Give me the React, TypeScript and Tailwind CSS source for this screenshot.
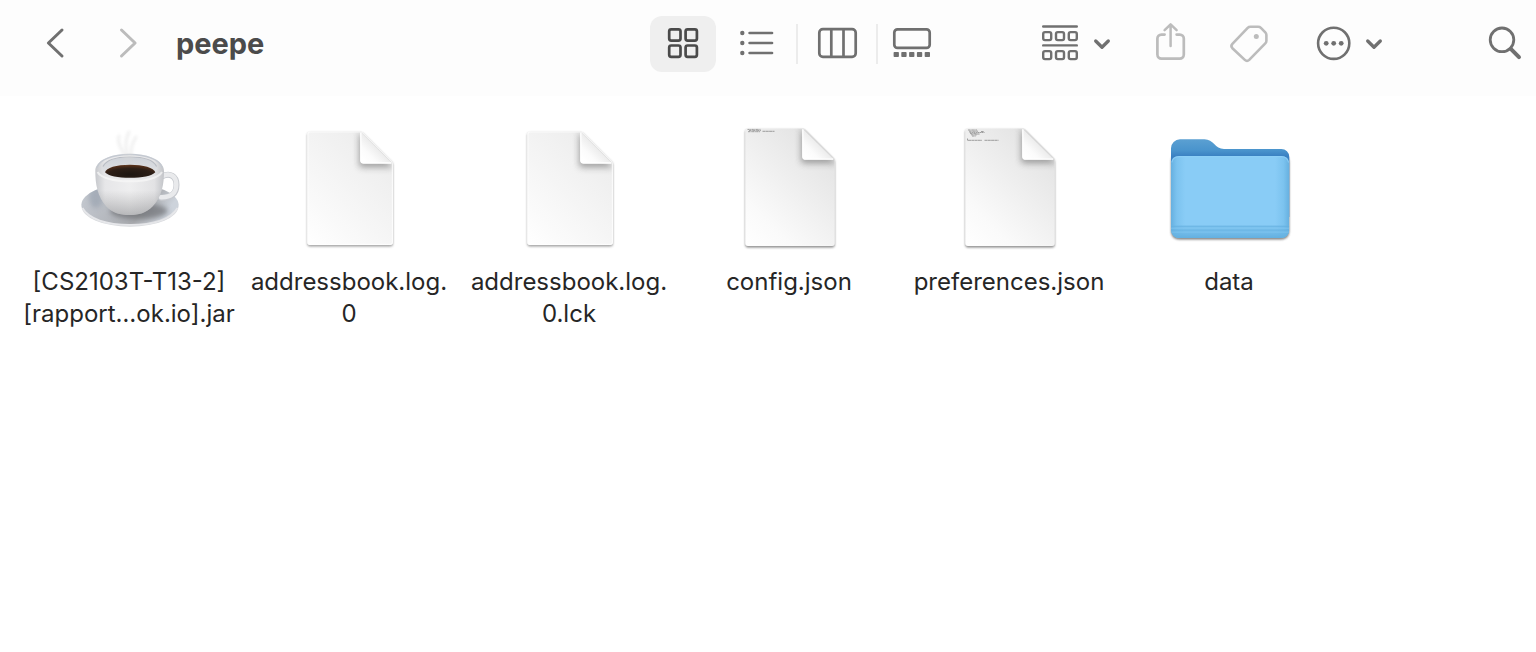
import type { ReactNode } from "react";

function Icon({ children }: { children: ReactNode }) {
  return (
    <svg
      viewBox="0 0 40 40"
      aria-hidden="true"
      fill="none"
      stroke="currentColor"
      strokeWidth="2.7"
      strokeLinecap="round"
      strokeLinejoin="round"
      className="h-10 w-10 shrink-0 overflow-visible"
    >
      {children}
    </svg>
  );
}

function MenuChevron() {
  return (
    <svg viewBox="0 0 20 40" aria-hidden="true" fill="none" className="h-10 w-5 shrink-0">
      <path
        d="M3.7 17l6.3 6.2 6.3-6.2"
        stroke="currentColor"
        strokeWidth="3.3"
        strokeLinecap="round"
        strokeLinejoin="round"
      />
    </svg>
  );
}

function Divider() {
  return <span className="h-10 w-0.5 bg-[#ececec]" />;
}

function Toolbar() {
  return (
    <header className="flex h-24 items-center bg-[#fdfdfd] pr-[11px] pb-2 pl-9 text-[#707070]">
      <nav className="flex min-w-0 flex-1 items-center">
        <button type="button" aria-label="Back">
          <Icon>
            <path d="M26 6 12.4 19 26 32" strokeWidth="3" />
          </Icon>
        </button>
        <button type="button" aria-label="Forward" className="ml-8 text-[#bcbcbc]">
          <Icon>
            <path d="M13.500 6l13.6 13-13.6 13" strokeWidth="3" />
          </Icon>
        </button>
        <h1 className="ml-7 truncate text-[29px] leading-10 font-bold text-[#4b4b4b]">peepe</h1>
      </nav>

      <div className="flex shrink-0 items-center" role="group" aria-label="View">
        <button
          type="button"
          aria-label="Icons"
          aria-pressed="true"
          className="flex h-14 w-[66px] items-center justify-center rounded-xl bg-[#efefef] text-[#4a4a4a]"
        >
          <Icon>
            <rect x="6.2" y="5.3" width="11.3" height="11.3" rx="2" />
            <rect x="22.6" y="5.3" width="11.3" height="11.3" rx="2" />
            <rect x="6.2" y="21.5" width="11.3" height="11.3" rx="2" />
            <rect x="22.6" y="21.5" width="11.3" height="11.3" rx="2" />
          </Icon>
        </button>
        <button type="button" aria-label="List" className="flex h-14 w-20 items-center justify-center">
          <Icon>
            <path d="M13.6 9H36M13.6 19H36M13.6 29H36" />
            <g fill="currentColor" stroke="none">
              <circle cx="6.3" cy="9" r="2.2" />
              <circle cx="6.3" cy="19" r="2.2" />
              <circle cx="6.3" cy="29" r="2.2" />
            </g>
          </Icon>
        </button>
        <Divider />
        <button type="button" aria-label="Columns" className="flex h-14 w-[78px] items-center justify-center">
          <Icon>
            <rect x="2.3" y="5.2" width="36.4" height="27.6" rx="3.6" />
            <path d="M14.3 5.5v27M26.5 5.5v27" strokeLinecap="butt" />
          </Icon>
        </button>
        <Divider />
        <button type="button" aria-label="Gallery" className="flex h-14 w-[68px] items-center justify-center">
          <Icon>
            <rect x="2.3" y="5.3" width="35.4" height="18.6" rx="3.2" />
            <g fill="currentColor" stroke="none">
              <rect x="1.6" y="28" width="5.3" height="5" rx="0.8" />
              <rect x="9.3" y="28" width="5.3" height="5" rx="0.8" />
              <rect x="17.1" y="28" width="5.3" height="5" rx="0.8" />
              <rect x="24.9" y="28" width="5.3" height="5" rx="0.8" />
              <rect x="32.7" y="28" width="5.3" height="5" rx="0.8" />
            </g>
          </Icon>
        </button>
      </div>

      <button type="button" aria-label="Group items" className="ml-[94px] flex shrink-0 gap-3">
        <Icon>
          <g strokeWidth="2.4">
            <path d="M3.2 2.5h33.6M3.2 21.4h33.6" />
            <rect x="3.2" y="8.1" width="8" height="8" rx="1.8" />
            <rect x="16" y="8.1" width="8" height="8" rx="1.8" />
            <rect x="28.8" y="8.1" width="8" height="8" rx="1.8" />
            <rect x="3.2" y="27.1" width="8" height="8" rx="1.8" />
            <rect x="16" y="27.1" width="8" height="8" rx="1.8" />
            <rect x="28.8" y="27.1" width="8" height="8" rx="1.8" />
          </g>
        </Icon>
        <MenuChevron />
      </button>
      <button type="button" aria-label="Share" className="ml-[38px] text-[#bcbcbc]">
        <Icon>
          <path d="M14.6 10.6h-3.2a4 4 0 0 0-4 4v16a4 4 0 0 0 4 4h18.4a4 4 0 0 0 4-4v-16a4 4 0 0 0-4-4h-3.2" />
          <path d="M20.6 22V.4M14.6 6.2l6-5.8 6 5.8" strokeWidth="2.5" />
        </Icon>
      </button>
      <button type="button" aria-label="Edit tags" className="ml-[38px] text-[#bcbcbc]">
        <Icon>
          <path
            strokeWidth="2.6"
            d="M22.4 2.8h7.8q1.6 0 2.7 1.1l4.4 4.4q1.1 1.1 1.1 2.7v5.7q0 1.6-1.1 2.7L21.2 35.9q-2.2 2.1-4.4 0L4.4 24.2q-2-2.2 0-4.4L19.7 3.9q1.1-1.1 2.7-1.1Z"
          />
          <circle cx="28.3" cy="12.4" r="2.5" fill="currentColor" stroke="none" />
        </Icon>
      </button>
      <button type="button" aria-label="More actions" className="ml-[46px] flex shrink-0 gap-[10px]">
        <Icon>
          <circle cx="19.7" cy="19.3" r="15.6" strokeWidth="2.6" />
          <g fill="currentColor" stroke="none">
            <circle cx="12.2" cy="19.3" r="2.4" />
            <circle cx="19.7" cy="19.3" r="2.4" />
            <circle cx="27.2" cy="19.3" r="2.4" />
          </g>
        </Icon>
        <MenuChevron />
      </button>
      <button type="button" aria-label="Search" className="ml-[101px]">
        <Icon>
          <circle cx="17" cy="15.8" r="11.8" strokeWidth="2.8" />
          <path d="M25.8 24.8l8.2 8.3" strokeWidth="4" />
        </Icon>
      </button>
    </header>
  );
}

function Art({ children }: { children: ReactNode }) {
  return (
    <svg viewBox="0 0 120 120" aria-hidden="true" className="h-[120px] w-[120px] overflow-visible">
      {children}
    </svg>
  );
}

function CoffeeCup() {
  const body =
    "M26.3 43C26.3 33 41 25.8 60.6 25.8S95 33 95 43c0 13-2 26-11.5 35.5C77 85 70 87 60.5 87S43.5 85 37.5 78.5C28.5 69 26.3 56 26.3 43Z";
  return (
    <Art>
      <defs>
        <linearGradient id="saucer" x1="0" y1="0" x2="1" y2="0.3">
          <stop offset="0" stopColor="#c6cbd2" />
          <stop offset="0.3" stopColor="#bcc0c7" />
          <stop offset="0.75" stopColor="#a9abaf" />
          <stop offset="1" stopColor="#cdd3db" />
        </linearGradient>
        <linearGradient id="cup" x1="0" y1="0" x2="1" y2="0">
          <stop offset="0" stopColor="#c6c8cc" />
          <stop offset="0.14" stopColor="#e6e6e8" />
          <stop offset="0.5" stopColor="#eeeeef" />
          <stop offset="0.86" stopColor="#e2e2e4" />
          <stop offset="1" stopColor="#c2c4c8" />
        </linearGradient>
        <linearGradient id="cupShade" x1="0" y1="0" x2="0" y2="1">
          <stop offset="0.6" stopColor="#777" stopOpacity="0" />
          <stop offset="1" stopColor="#66686c" stopOpacity="0.4" />
        </linearGradient>
        <linearGradient id="wall" x1="0" y1="0" x2="0" y2="1">
          <stop offset="0" stopColor="#cfd3d9" />
          <stop offset="1" stopColor="#e6e6e8" />
        </linearGradient>
        <radialGradient id="coffee" cx="0.5" cy="0.75" r="0.7">
          <stop offset="0" stopColor="#1d1611" />
          <stop offset="0.65" stopColor="#2d1f17" />
          <stop offset="1" stopColor="#573019" />
        </radialGradient>
        <filter id="soft" x="-50%" y="-50%" width="200%" height="200%">
          <feGaussianBlur stdDeviation="2.6" />
        </filter>
        <filter id="steam" x="-80%" y="-50%" width="260%" height="200%">
          <feGaussianBlur stdDeviation="1.8" />
        </filter>
        <clipPath id="saucerClip">
          <ellipse cx="61" cy="76.5" rx="48.5" ry="20.5" />
        </clipPath>
      </defs>
      <ellipse cx="61" cy="78" rx="48.5" ry="20.7" fill="#d8dadd" />
      <ellipse cx="61" cy="76.5" rx="48.5" ry="20.5" fill="url(#saucer)" />
      <path d="M13.5 80c6 11 24 16.8 47.5 16.8S102 91 108.5 80" fill="none" stroke="#e6e7ea" strokeWidth="1.8" />
      <g clipPath="url(#saucerClip)">
        <ellipse cx="70" cy="83" rx="29" ry="8" fill="#606266" opacity="0.6" filter="url(#soft)" />
        <ellipse cx="27" cy="68" rx="7" ry="12" fill="#8b96a6" opacity="0.5" filter="url(#soft)" />
      </g>
      <path
        d="M93 48.5c8-4.500 14.5 0 14.5 8.2 0 9-5.500 13.3-15.5 13"
        fill="none"
        stroke="#c6c9ce"
        strokeWidth="6"
        strokeLinecap="round"
      />
      <path
        d="M93 48.3c8-4.500 14.3 0 14.3 8.2 0 8.8-5.300 13-15.3 12.7"
        fill="none"
        stroke="#e9eaec"
        strokeWidth="4.4"
        strokeLinecap="round"
      />
      <path d={body} fill="url(#cup)" />
      <path d={body} fill="url(#cupShade)" />
      <path
        d="M28 39.5C30.5 31.8 43.5 26.5 60.6 26.5s30.2 5.300 32.6 13"
        fill="none"
        stroke="#c4c9d1"
        strokeWidth="1.4"
      />
      <ellipse cx="60.8" cy="40.2" rx="27.5" ry="11" fill="url(#wall)" />
      <path
        d="M34 38.5C37 32.5 47 29 60.8 29s24 3.500 26.8 9.5"
        fill="none"
        stroke="#b9bdc4"
        strokeWidth="1.2"
      />
      <path d="M36 44.2c1-4.500 11.5-7.500 24.9-7.500S85 39.7 86.3 44.2C83 48 73 49.8 61 49.8S39.5 48 36 44.2Z" fill="url(#coffee)" />
      <path
        d="M28.5 44c3 5.500 15.5 9.3 32.3 9.3S90 49.5 93 44"
        fill="none"
        stroke="#f8f8f8"
        strokeWidth="2"
        opacity="0.7"
      />
      <g fill="none" stroke="#d8d8d8" strokeWidth="3" strokeLinecap="round" opacity="0.38" filter="url(#steam)">
        <path d="M50 8c-3 8 5 14 7 27" />
        <path d="M60 4c-5 10-3 19 0 30" />
        <path d="M67 9c-5 8-6 16-4 22" />
      </g>
    </Art>
  );
}

function DocumentDefs({ id, page, edge }: { id: string; page: string; edge: string }) {
  return (
    <defs>
      <linearGradient id={`${id}-page`} x1="0" y1="1" x2="0.75" y2="0">
        <stop offset="0" stopColor="#ffffff" />
        <stop offset="0.25" stopColor="#fafafa" />
        <stop offset="1" stopColor={edge} />
      </linearGradient>
      <linearGradient id={`${id}-fold`} x1="0.1" y1="0.9" x2="0.55" y2="0.45">
        <stop offset="0" stopColor="#ffffff" />
        <stop offset="0.4" stopColor="#fbfbfb" />
        <stop offset="1" stopColor="#e9e9e9" />
      </linearGradient>
      <filter id={`${id}-shadow`} x="-20%" y="-20%" width="140%" height="140%">
        <feGaussianBlur stdDeviation="1.3" />
      </filter>
      <filter id={`${id}-curl`} x="-50%" y="-50%" width="200%" height="200%">
        <feGaussianBlur stdDeviation="3" />
      </filter>
      <clipPath id={`${id}-clip`}>
        <path d={page} />
      </clipPath>
    </defs>
  );
}

function BlankDocument({ id }: { id: string }) {
  const page =
    "M21 3.4h50.2q1.800 0 3.2 1.3l28 27.600q1.600 1.500 1.600 3.400v78.600a2.700 2.700 0 0 1-2.700 2.700H21a2.700 2.700 0 0 1-2.700-2.700V6.100A2.700 2.700 0 0 1 21 3.4Z";
  return (
    <Art>
      <DocumentDefs id={id} page={page} edge="#ececec" />
      <path d={page} transform="translate(0 1.4)" fill="#8a8a8a" opacity="0.8" filter={`url(#${id}-shadow)`} />
      <path d={page} fill={`url(#${id}-page)`} />
      <g clipPath={`url(#${id}-clip)`}>
        <path d="M70 4v32q0 3.500 3 3.500h32L70 4Z" fill="#6f6f6f" opacity="0.6" filter={`url(#${id}-curl)`} />
        <path d={page} fill="none" stroke="#fff" strokeWidth="2.4" opacity="0.7" />
      </g>
      <path d="M71.500 3.700v28.600q0 3 3 3h28.500Z" fill={`url(#${id}-fold)`} />
      <path d="M71.800 4.500v27.800q0 2.700 2.700 2.700h27.800" fill="none" stroke="#fff" strokeWidth="1.300" />
    </Art>
  );
}

function TextDocument({ id, children }: { id: string; children: ReactNode }) {
  const page =
    "M19 .3h54.200q1.800 0 3.200 1.300l27.700 27.600q1.600 1.500 1.600 3.400v82.700a2.700 2.700 0 0 1-2.700 2.700H19a2.700 2.700 0 0 1-2.700-2.700V3A2.700 2.700 0 0 1 19 .3Z";
  return (
    <Art>
      <DocumentDefs id={id} page={page} edge="#e2e2e2" />
      <path d={page} transform="translate(0 1.5)" fill="#777" opacity="0.85" filter={`url(#${id}-shadow)`} />
      <path d={page} fill={`url(#${id}-page)`} />
      <g clipPath={`url(#${id}-clip)`}>
        <path d="M72 0v32q0 3.500 3 3.500h33L72 0Z" fill="#6f6f6f" opacity="0.6" filter={`url(#${id}-curl)`} />
        <path d={page} fill="none" stroke="#fff" strokeWidth="1.200" opacity="0.4" />
        <g fill="none" stroke="#777" strokeWidth="0.900" opacity="0.75">
          {children}
        </g>
      </g>
      <path d="M73.500 .4v28q0 3 3 3h28.500Z" fill={`url(#${id}-fold)`} />
      <path d="M73.800 1.200v27.200q0 2.700 2.700 2.700h27.500" fill="none" stroke="#fff" strokeWidth="1.300" />
    </Art>
  );
}

function Folder() {
  return (
    <Art>
      <defs>
        <linearGradient id="folderBack" x1="0" y1="0" x2="0" y2="1">
          <stop offset="0" stopColor="#5ba0d2" />
          <stop offset="0.14" stopColor="#4a94cd" />
          <stop offset="0.22" stopColor="#3a80c2" />
          <stop offset="1" stopColor="#3a80c2" />
        </linearGradient>
        <linearGradient id="folderSides" x1="0" y1="0" x2="1" y2="0">
          <stop offset="0" stopColor="#66b0e0" />
          <stop offset="0.05" stopColor="#7cc3ef" />
          <stop offset="0.12" stopColor="#89ccf6" />
          <stop offset="0.88" stopColor="#89ccf6" />
          <stop offset="0.95" stopColor="#7cc3ef" />
          <stop offset="1" stopColor="#66b0e0" />
        </linearGradient>
        <linearGradient id="folderBase" x1="0" y1="0" x2="0" y2="1">
          <stop offset="0" stopColor="#6db8e6" stopOpacity="0.3" />
          <stop offset="1" stopColor="#63b0e0" />
        </linearGradient>
        <filter id="folderShadow" x="-20%" y="-20%" width="140%" height="140%">
          <feGaussianBlur stdDeviation="1.2" />
        </filter>
        <clipPath id="folderClip">
          <rect x="2" y="28" width="118.3" height="82" rx="8" />
        </clipPath>
      </defs>
      <rect x="2" y="26" width="118.3" height="85.5" rx="8" fill="#555" opacity="0.75" filter="url(#folderShadow)" />
      <path d="M2 20.3a9 9 0 0 1 9-9h24.500c9 0 10.500 9.700 19.500 9.700h57.300a8 8 0 0 1 8 8v60H2Z" fill="url(#folderBack)" />
      <g clipPath="url(#folderClip)">
        <rect x="2" y="28" width="118.3" height="82" fill="url(#folderSides)" />
        <rect x="2" y="97" width="118.3" height="13" fill="url(#folderBase)" />
        <path d="M2 98.4h118.3M2 102.2h118.3" stroke="#64aede" strokeWidth="1" opacity="0.6" />
        <path d="M2 100.3h118.3M2 104.2h118.3" stroke="#86c9f2" strokeWidth="0.9" opacity="0.6" />
      </g>
      <path
        d="M2.8 34.500q1-5.800 7.200-5.800h102.300q6.200 0 7.200 5.800"
        fill="none"
        stroke="#8fd0f8"
        strokeWidth="1.2"
        opacity="0.8"
      />
    </Art>
  );
}

const files: { lines: string[]; art: ReactNode }[] = [
  { lines: ["[CS2103T-T13-2]", "[rapport…ok.io].jar"], art: <CoffeeCup /> },
  { lines: ["addressbook.log.", "0"], art: <BlankDocument id="log" /> },
  { lines: ["addressbook.log.", "0.lck"], art: <BlankDocument id="lock" /> },
  {
    lines: ["config.json"],
    art: (
      <TextDocument id="config">
        <path d="M18.5 1.4h13M20 2.6h12M19 3.7h12" strokeDasharray="2.2 0.5 1 0.4" />
        <path d="M33.5 3.3h12" strokeDasharray="3 0.3" />
      </TextDocument>
    ),
  },
  {
    lines: ["preferences.json"],
    art: (
      <TextDocument id="preferences">
        <path
          d="M19 2h9M20 3.200h9M20.500 4.400h8M21 5.600h7M22 6.800h6M23 8h4M28.500 4.500h7M28 6h3M32 3.500h3"
          strokeDasharray="2 0.4 1.2 0.3"
        />
        <path d="M18.5 10.5v2M19 12.3h14M35.5 12.3h14" strokeDasharray="3 0.3" />
      </TextDocument>
    ),
  },
  { lines: ["data"], art: <Folder /> },
];

export default function App() {
  return (
    <div className="min-h-screen bg-white font-['Inter','Liberation_Sans',sans-serif]">
      <Toolbar />
      <main className="pt-8 pl-[19px]">
        <ul className="grid grid-cols-[repeat(auto-fill,220px)] gap-y-8">
          {files.map((file) => (
            <li key={file.lines.join("")}>
              <button type="button" className="flex w-full flex-col items-center gap-[18px]">
                {file.art}
                <span className="text-2xl leading-8 whitespace-nowrap text-[#262626]">
                  {file.lines.map((line) => (
                    <span key={line} className="block">
                      {line}
                    </span>
                  ))}
                </span>
              </button>
            </li>
          ))}
        </ul>
      </main>
    </div>
  );
}
